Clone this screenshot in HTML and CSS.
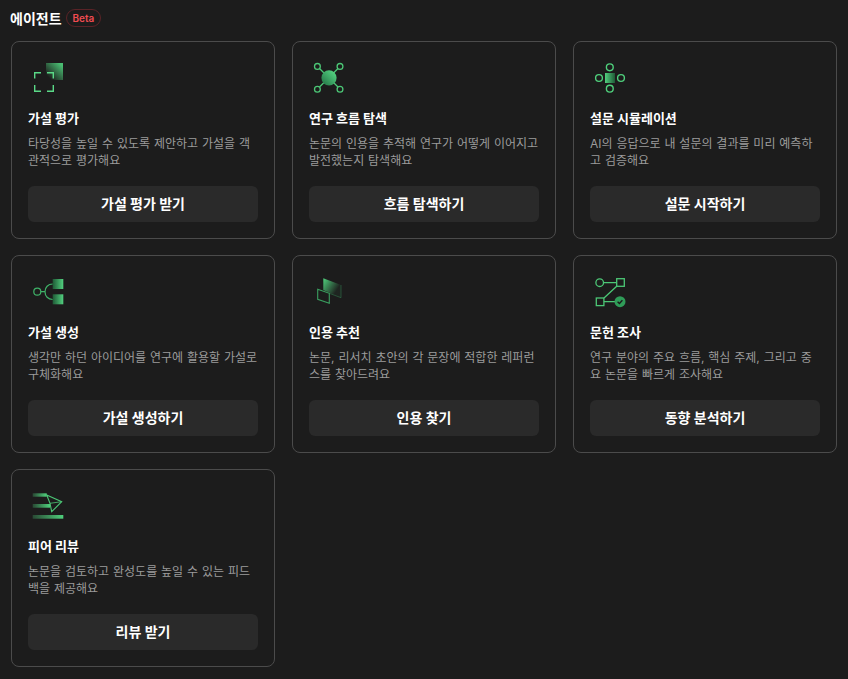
FILE: index.html

```html
<!DOCTYPE html>
<html lang="ko">
<head>
  <meta charset="UTF-8">
  <title>에이전트</title>
  <link rel="stylesheet" href="styles.css">
</head>
<body>

  <div class="agents">
    <div class="agents-head">
      <h2>에이전트</h2>
      <span class="beta">Beta</span>
    </div>

    <div class="card-grid">

      <div class="card">
        <svg class="icon" viewBox="0 0 40 40" fill="none">
          <defs>
            <linearGradient id="g1" x1="0" y1="1" x2="1" y2="0">
              <stop offset="0.15" stop-color="#4fd07c" stop-opacity="0"/>
              <stop offset="0.9" stop-color="#4fd07c" stop-opacity="0.9"/>
            </linearGradient>
          </defs>
          <rect x="18" y="5" width="17" height="17" fill="url(#g1)"/>
          <path d="M6.700 20.500V14.700H13M19 14.700H25.300V20.500M6.700 27V33.300H13M19 33.300H25.300V27" stroke="#5ad987" stroke-width="1.400"/>
        </svg>
        <h3>가설 평가</h3>
        <p>타당성을 높일 수 있도록 제안하고 가설을 객관적으로 평가해요</p>
        <button class="card-btn">가설 평가 받기</button>
      </div>

      <div class="card">
        <svg class="icon" viewBox="0 0 40 40" fill="none">
          <defs>
            <linearGradient id="g2" x1="1" y1="0" x2="0" y2="1">
              <stop offset="0.1" stop-color="#55d582"/>
              <stop offset="0.9" stop-color="#27794a"/>
            </linearGradient>
          </defs>
          <path d="M10.500 10.500L29 29M29 10.500L10.500 29" stroke="#4cc776" stroke-width="1.300"/>
          <circle cx="20" cy="19.800" r="7.600" fill="url(#g2)"/>
          <circle cx="8.400" cy="8.400" r="2.900" stroke="#4cc776" stroke-width="1.300"/>
          <circle cx="31" cy="8.400" r="2.900" stroke="#4cc776" stroke-width="1.300"/>
          <circle cx="8.400" cy="31.200" r="2.900" stroke="#4cc776" stroke-width="1.300"/>
          <circle cx="31" cy="31.200" r="2.900" stroke="#4cc776" stroke-width="1.300"/>
        </svg>
        <h3>연구 흐름 탐색</h3>
        <p>논문의 인용을 추적해 연구가 어떻게 이어지고 발전했는지 탐색해요</p>
        <button class="card-btn">흐름 탐색하기</button>
      </div>

      <div class="card">
        <svg class="icon" viewBox="0 0 40 40" fill="none">
          <defs>
            <linearGradient id="g3" x1="0" y1="0" x2="1" y2="0">
              <stop offset="0" stop-color="#52d07f"/>
              <stop offset="1" stop-color="#1f5a36"/>
            </linearGradient>
          </defs>
          <rect x="15" y="15" width="10" height="10" fill="url(#g3)"/>
          <circle cx="19.800" cy="9.300" r="3.400" stroke="#4fd07c" stroke-width="1.400"/>
          <circle cx="9" cy="20" r="3.400" stroke="#4fd07c" stroke-width="1.400"/>
          <circle cx="31" cy="20" r="3.400" stroke="#4fd07c" stroke-width="1.400"/>
          <circle cx="19.800" cy="30.700" r="3.400" stroke="#4fd07c" stroke-width="1.400"/>
        </svg>
        <h3>설문 시뮬레이션</h3>
        <p>AI의 응답으로 내 설문의 결과를 미리 예측하고 검증해요</p>
        <button class="card-btn">설문 시작하기</button>
      </div>

      <div class="card">
        <svg class="icon" viewBox="0 0 40 40" fill="none">
          <defs>
            <linearGradient id="g4" x1="1" y1="0" x2="0" y2="0">
              <stop offset="0" stop-color="#52d07f"/>
              <stop offset="1" stop-color="#1f5a36"/>
            </linearGradient>
          </defs>
          <circle cx="9.300" cy="19.700" r="3.500" stroke="#3fb268" stroke-width="1.200"/>
          <path d="M13 19.700H17M24.700 12C20 12 17 15.500 17 19.700C17 24 20 27.500 24.700 27.500" stroke="#3fb268" stroke-width="1.200"/>
          <rect x="24.700" y="7" width="10.600" height="10" fill="url(#g4)"/>
          <rect x="24.700" y="22.300" width="10.600" height="10" fill="url(#g4)"/>
        </svg>
        <h3>가설 생성</h3>
        <p>생각만 하던 아이디어를 연구에 활용할 가설로 구체화해요</p>
        <button class="card-btn">가설 생성하기</button>
      </div>

      <div class="card">
        <svg class="icon" viewBox="0 0 40 40" fill="none">
          <defs>
            <linearGradient id="g5" x1="0" y1="0" x2="1" y2="0.700">
              <stop offset="0" stop-color="#4fd07c"/>
              <stop offset="0.800" stop-color="#4fd07c" stop-opacity="0.050"/>
            </linearGradient>
          </defs>
          <path d="M14.300 6.300L32 13V25.700L14.300 18Z" fill="url(#g5)"/>
          <path d="M8.700 17.300L20.300 21.300V31.300L8.700 27.300Z" stroke="#3a9e5f" stroke-width="1.100"/>
          <path d="M20.300 21.300L32 25.700V13" stroke="#3a9e5f" stroke-width="0.800" opacity="0.500"/>
        </svg>
        <h3>인용 추천</h3>
        <p>논문, 리서치 초안의 각 문장에 적합한 레퍼런스를 찾아드려요</p>
        <button class="card-btn">인용 찾기</button>
      </div>

      <div class="card">
        <svg class="icon" viewBox="0 0 40 40" fill="none">
          <circle cx="9.700" cy="10.700" r="3.800" stroke="#4cc776" stroke-width="1.300"/>
          <rect x="26.700" y="6.700" width="7.600" height="7.600" stroke="#4cc776" stroke-width="1.300"/>
          <rect x="6.300" y="26" width="7.600" height="7.600" stroke="#4cc776" stroke-width="1.300"/>
          <path d="M13.500 10.700H26.700M14 26L26.700 14.300M14 29.700H25" stroke="#4cc776" stroke-width="1.300"/>
          <circle cx="30" cy="29.700" r="5.500" fill="#2f9c58"/>
          <path d="M27.600 29.800L29.400 31.500L32.400 28.200" stroke="#1b1b1b" stroke-width="1.400"/>
        </svg>
        <h3>문헌 조사</h3>
        <p>연구 분야의 주요 흐름, 핵심 주제, 그리고 중요 논문을 빠르게 조사해요</p>
        <button class="card-btn">동향 분석하기</button>
      </div>

      <div class="card">
        <svg class="icon" viewBox="0 0 40 40" fill="none">
          <defs>
            <linearGradient id="g7" x1="0" y1="0" x2="1" y2="0">
              <stop offset="0" stop-color="#4fd07c" stop-opacity="0.250"/>
              <stop offset="1" stop-color="#4fd07c"/>
            </linearGradient>
          </defs>
          <rect x="4.700" y="7.300" width="14" height="3.400" fill="url(#g7)"/>
          <rect x="4.700" y="18" width="17.300" height="3.700" fill="url(#g7)"/>
          <rect x="4.700" y="29" width="30.600" height="3.700" fill="url(#g7)"/>
          <path d="M18.700 9L33.700 15.700L23.700 25.700L22 17.300Z" stroke="#4cc776" stroke-width="1.100"/>
          <path d="M22 17.300L33.700 15.700" stroke="#4cc776" stroke-width="0.800"/>
        </svg>
        <h3>피어 리뷰</h3>
        <p>논문을 검토하고 완성도를 높일 수 있는 피드백을 제공해요</p>
        <button class="card-btn">리뷰 받기</button>
      </div>

    </div>
  </div>

</body>
</html>
```

FILE: styles.css

```css
body {
  margin: 0;
  background-color: #1c1c1c;
  font-family: Inter, "Noto Sans CJK KR", sans-serif;
  color: #fff;
}

.agents {
  padding: 9px 11px 12px;
}

.agents-head {
  display: flex;
  align-items: center;
  gap: 4px;
  height: 18px;
  margin-bottom: 14px;
}

.agents-head h2 {
  margin: 0 0 0 -1px;
  font-size: 14px;
  font-weight: 700;
}

.beta {
  padding: 0 6px;
  height: 16px;
  line-height: 16px;
  border: 1px solid #5a2327;
  border-radius: 9px;
  font-size: 10px;
  font-weight: 600;
  color: #f04b51;
}

.card-grid {
  display: grid;
  grid-template-columns: repeat(3, 264px);
  column-gap: 17px;
  row-gap: 16px;
}

.card {
  box-sizing: border-box;
  height: 198px;
  display: flex;
  flex-direction: column;
  padding: 16px;
  border: 1px solid #4b4b4b;
  border-radius: 8px;
}

.icon {
  display: block;
  width: 40px;
  height: 40px;
  flex-shrink: 0;
}

.card h3 {
  margin: 10px 0 0;
  font-size: 13px;
  line-height: 20px;
  font-weight: 700;
}

.card p {
  margin: 7px 0 0;
  font-size: 12px;
  line-height: 17px;
  word-spacing: 0.5px;
  color: #9b9b9b;
}

.card-btn {
  margin-top: auto;
  height: 36px;
  padding: 0 0 2px;
  border: none;
  border-radius: 6px;
  background-color: #2a2a2a;
  color: #fff;
  font-family: inherit;
  font-size: 14px;
  font-weight: 700;
}
```
